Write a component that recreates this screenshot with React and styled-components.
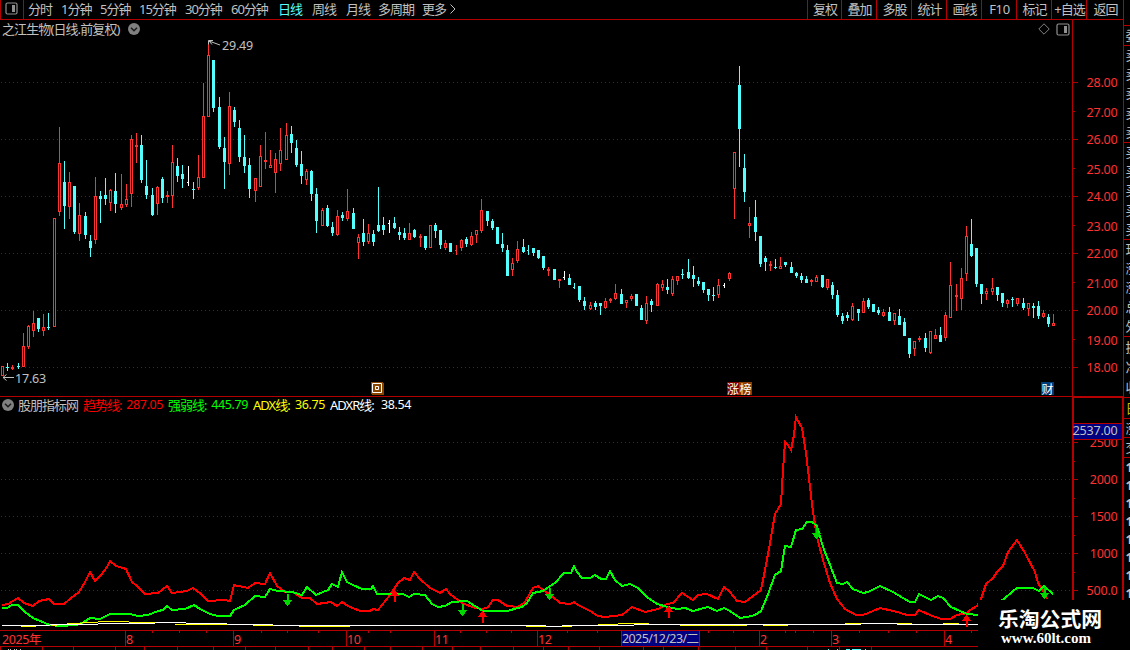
import React from "react";
import styled, { createGlobalStyle } from "styled-components";

const RED = "#b40000";
const GRID = "#a00000";
const UP = "#ff3232";
const DOWN = "#54ffff";
const TEXT = "#c0c0c0";
const CJK = '"Noto Sans", "Noto Sans CJK SC", sans-serif';

const GlobalStyle = createGlobalStyle`
  html, body { margin: 0; background: #000; overflow: hidden; }
  * { box-sizing: border-box; }
  svg { display: block; flex: none; }
  text { font-family: ${CJK}; white-space: pre; }
`;

const Screen = styled.div`
  position: relative;
  display: flex;
  width: 1130px;
  height: 650px;
  overflow: hidden;
  background: #000;
  color: ${TEXT};
  font: 13px/18px ${CJK};
  letter-spacing: -1px;
  white-space: nowrap;
`;

const Main = styled.div`
  display: flex;
  flex-direction: column;
  width: 1124px;
`;

const Toolbar = styled.div`
  display: flex;
  height: 20px;
  border-bottom: 1px solid ${RED};
  border-right: 1px solid ${RED};
`;

const IconCell = styled.div`
  display: flex;
  width: 24px;
  padding: 2px 0 0 4px;
  border: solid ${RED};
  border-width: 0 1px;
`;

const Periods = styled.div`
  display: flex;
  flex: 1;
  padding-left: 4px;
`;

const Period = styled.span`
  width: ${(p) => p.$w}px;
  color: ${(p) => (p.$active ? DOWN : TEXT)};
`;

const Action = styled.span`
  width: ${(p) => p.$w}px;
  border-left: 1px solid ${RED};
  text-align: center;
  padding-left: 1px;
  letter-spacing: ${(p) => p.$ls || -1}px;
`;

const Pane = styled.div`
  position: relative;
  display: flex;
  height: ${(p) => p.$h}px;
`;

const Legend = styled.div`
  position: absolute;
  top: ${(p) => p.$top}px;
  left: 2px;
  display: flex;
  align-items: center;
  height: 18px;
  gap: ${(p) => p.$gap}px;
`;

const Title = styled.span`
  width: ${(p) => p.$w}px;
  letter-spacing: ${(p) => p.$ls || -1}px;
`;

const Reading = styled.span`
  display: flex;
  justify-content: space-between;
  width: ${(p) => p.$w}px;
  margin-right: 1px;
  color: ${(p) => p.$color};
`;

const Value = styled.span`
  font-size: 12.5px;
  letter-spacing: -0.4px;
`;

const PaneTools = styled.div`
  position: absolute;
  top: 3px;
  right: 54px;
  display: flex;
  gap: 6px;
`;

const EventTag = styled.span`
  position: absolute;
  left: ${(p) => p.$x}px;
  top: 362px;
  display: flex;
  height: 13px;
  font: 12px/13px "Noto Sans CJK SC", sans-serif;
  letter-spacing: 0;
  color: #fff;
`;

const TagGlyph = styled.span`
  width: ${(p) => p.$w || 13}px;
  text-align: center;
  background: ${(p) => p.$bg};
`;

const QuoteStrip = styled.div`
  display: flex;
  flex-direction: column;
  width: 6px;
  height: 600px;
  overflow: hidden;
`;

const QuoteGroup = styled.div`
  display: flex;
  flex-direction: column;
  flex: none;
  justify-content: space-around;
  height: ${(p) => p.$h}px;
  padding-left: 1.5px;
  border-bottom: ${(p) => (p.$open ? "none" : `1px solid ${RED}`)};
  color: ${(p) => p.$color || TEXT};
  line-height: 17px;
  font-weight: ${(p) => (p.$bold ? 700 : 400)};
`;

const Watermark = styled.div`
  position: absolute;
  left: 978px;
  top: 600px;
  display: flex;
  flex-direction: column;
  width: 152px;
  height: 50px;
  padding: 6px 0 0 20px;
  background: #000;
  color: #fff;
  letter-spacing: 0;
`;

const SiteName = styled.span`
  font-family: "Noto Sans CJK SC", sans-serif;
  font-size: 20.8px;
  line-height: 24px;
  font-weight: 700;
`;

const SiteUrl = styled.span`
  padding-left: 3px;
  font: 700 15px/16px "Liberation Serif", serif;
`;

/* x, high, body top, body bottom, low, kind */
const candles = `2 366 366 376 376 r|7 363 367 368 371 c|12 365 367 369 370 r|18 363 366 367 369 c|23 333 346 367 367 r|28 325 326 347 349 r|33 311 323 331 337 r|38 318 318 329 332 c|43 314 327 331 336 r|48 313 327 328 330 c|54 218 218 327 327 r|59 127 163 212 216 r|64 161 182 206 229 c|69 172 182 207 219 r|74 186 186 232 234 c|79 203 215 234 241 r|85 212 216 235 239 c|90 235 241 248 257 c|95 177 196 240 244 r|100 191 196 199 223 c|105 178 195 199 205 c|110 189 190 203 211 r|115 173 191 204 213 c|121 174 204 208 210 r|126 184 199 205 207 r|131 135 139 194 207 r|136 133 145 147 163 r|141 135 145 180 183 c|146 160 186 195 199 c|152 188 195 215 216 c|157 186 187 204 215 r|162 177 179 198 203 c|167 191 195 197 203 r|172 145 162 196 208 r|177 158 166 176 182 c|182 165 174 179 188 c|188 166 182 182 186 w|193 182 189 190 199 c|198 155 177 188 190 r|203 83 116 178 178 r|208 42 55 117 117 r|213 60 60 108 112 c|219 97 107 147 149 c|224 137 148 162 189 c|229 92 106 164 175 r|234 107 110 122 127 c|239 120 128 157 162 c|244 135 157 166 173 c|249 158 165 189 198 c|255 178 178 191 202 r|260 145 156 187 187 r|265 132 160 162 169 r|270 150 165 168 168 r|275 153 159 173 193 r|280 128 150 164 171 r|286 123 135 160 160 r|291 126 134 143 153 c|296 140 148 165 167 c|301 151 164 176 184 c|306 169 171 180 185 r|311 170 171 194 201 c|316 188 194 221 233 c|322 208 210 226 226 r|327 205 208 226 227 c|332 222 227 233 236 c|337 210 216 235 236 r|342 212 215 218 221 c|347 189 211 219 221 r|353 208 213 229 229 c|358 234 237 243 259 r|363 219 233 242 246 c|368 224 233 242 244 r|373 230 234 242 246 c|378 187 225 231 232 c|383 217 225 230 235 c|389 220 223 223 233 w|394 217 223 228 229 c|399 227 232 235 240 c|404 228 233 238 240 c|409 223 233 240 240 r|414 229 230 237 238 c|420 234 236 238 247 r|425 236 236 248 250 c|430 225 225 248 248 r|435 223 225 231 238 c|440 230 230 245 249 c|445 240 243 248 250 r|450 243 243 252 252 c|456 245 250 250 255 r|461 239 240 248 251 r|466 237 239 244 247 c|471 232 236 245 246 r|476 230 230 235 243 r|481 199 210 231 233 r|487 211 211 221 226 c|492 219 221 228 230 c|497 227 227 244 244 c|502 233 244 248 252 c|507 245 250 276 276 c|512 258 263 270 276 r|517 241 249 261 263 r|523 239 247 252 253 c|528 245 250 250 255 c|533 248 248 253 256 c|538 250 250 258 259 c|543 256 256 268 270 c|548 267 269 271 276 r|554 269 269 280 280 c|559 279 279 281 288 r|564 271 277 277 280 w|569 274 278 285 285 c|574 283 287 287 289 c|579 286 286 300 302 c|584 297 301 306 310 c|590 302 305 309 310 r|595 301 303 307 310 c|600 303 303 306 315 c|605 298 301 308 309 r|610 298 299 301 303 r|615 284 293 299 300 r|621 289 294 304 304 c|626 300 300 303 308 r|631 294 296 299 301 r|636 294 294 306 306 c|641 305 308 320 320 c|646 296 303 321 324 r|651 299 301 305 312 c|657 283 284 306 306 r|662 280 284 288 291 r|667 279 287 290 294 c|672 276 279 294 296 r|677 276 276 281 285 r|682 269 274 275 279 c|688 259 272 278 279 c|693 266 275 279 287 c|698 277 281 284 286 c|703 282 282 290 293 c|708 289 289 295 301 c|713 287 295 296 301 c|718 279 285 295 298 r|724 283 285 285 288 w|729 272 273 279 281 r|734 152 152 189 219 r|739 66 85 129 167 c|744 154 168 192 202 c|749 207 223 226 238 r|755 200 217 232 241 c|760 236 236 264 267 c|765 256 258 262 271 c|770 261 264 266 271 r|775 259 267 268 269 c|780 257 266 269 269 r|785 262 262 265 267 c|791 262 267 273 273 c|796 272 273 276 278 c|801 273 276 280 283 c|806 276 279 283 283 c|811 279 280 282 286 r|816 275 277 282 282 r|822 275 275 287 288 c|827 279 279 288 290 r|832 282 285 295 299 c|837 290 295 315 317 c|842 313 316 321 324 c|847 312 315 318 321 c|852 303 306 320 321 r|858 309 309 313 321 c|863 298 301 313 313 r|868 298 300 307 309 c|873 304 304 312 312 c|878 307 310 313 315 c|883 309 312 316 317 r|889 307 312 321 321 c|894 313 313 321 325 r|899 309 316 325 325 c|904 318 322 336 336 c|909 338 338 354 358 c|914 341 341 349 356 r|919 336 338 340 342 r|925 333 338 348 352 c|930 331 331 353 354 r|935 329 335 339 339 r|940 327 335 342 342 c|945 312 315 338 341 r|950 262 285 318 318 r|956 284 295 297 311 r|961 268 278 299 310 r|966 226 236 274 281 r|971 219 244 256 257 c|976 248 248 284 287 c|981 284 284 294 304 c|986 288 291 294 300 r|992 278 288 292 295 r|997 287 287 295 301 c|1002 293 293 303 307 c|1007 299 300 304 308 r|1012 297 299 300 307 c|1017 298 298 304 306 r|1023 298 303 308 310 c|1028 303 303 309 316 r|1033 303 306 308 318 c|1038 301 306 316 319 c|1043 310 313 317 318 r|1048 314 317 324 327 c|1053 314 323 326 326 r`
  .split("|")
  .map((row) => {
    const f = row.split(" ");
    return [...f.slice(0, 5).map(Number), f[5]];
  });

const trend = "2,605 8,604 18,598 24,603 33,606 39,601 49,599 54,604 64,604 71,598 79,592 85,582 90,572 95,581 101,575 107,567 110,561 116,566 126,569 132,582 137,586 145,594 158,593 167,586 172,593 187,591 193,588 201,594 208,601 224,600 230,601 234,585 248,588 255,583 265,584 270,573 277,586 285,592 293,592 302,598 310,598 317,604 331,602 337,606 342,602 348,606 360,611 370,611 373,609 378,610 390,595 398,583 404,578 410,580 414,572 420,579 430,588 440,593 446,589 450,594 462,603 475,608 483,609 488,607 493,600 498,600 507,606 518,607 525,602 533,588 538,586 543,590 552,596 560,603 570,604 574,602 578,605 590,611 598,616 605,617 622,615 632,607 645,612 658,609 667,604 673,603 682,593 693,600 698,595 707,594 718,599 724,587 730,592 737,601 745,602 753,596 761,590 765,570 770,543 775,514 781,504 783,470 785,442 788,445 791,450 794,435 796,417 802,428 806,453 810,487 813,512 817,537 823,560 830,583 837,599 845,609 856,615 863,615 873,611 880,608 897,612 907,615 915,615 919,610 932,616 942,619 950,619 957,615 967,613 970,610 977,606 981,599 986,584 993,578 997,572 1003,566 1008,552 1017,540 1025,553 1035,572 1038,583 1044,592 1047,599";
const strength = "2,608 7,608 12,605 18,605 25,612 33,618 45,623 50,625 60,626 77,625 84,622 90,618 100,619 110,614 130,614 138,616 148,615 158,611 163,610 167,606 172,610 185,609 194,605 200,609 210,614 218,616 230,616 234,610 245,605 255,596 265,597 270,589 278,591 292,592 302,595 307,587 316,595 323,592 328,590 332,584 338,587 342,572 347,582 353,585 362,589 371,589 373,586 377,594 403,594 409,597 414,594 425,595 432,604 438,607 445,606 452,602 467,601 483,611 507,611 522,607 527,603 533,593 543,591 550,586 555,583 564,573 571,573 574,566 577,572 582,578 590,578 595,575 601,579 606,579 610,571 615,580 622,586 630,584 638,588 647,597 657,604 668,607 677,609 685,608 693,611 708,607 717,611 724,608 730,611 740,618 747,617 755,615 761,611 767,597 775,575 781,571 785,546 791,547 796,530 802,529 807,522 812,522 817,526 823,547 832,570 837,583 843,584 847,582 853,589 863,593 868,592 880,586 893,592 903,598 910,602 915,602 919,594 931,600 938,596 943,598 951,607 960,611 967,614 978,615 1004,599 1013,591 1017,588 1033,588 1039,591 1044,586 1053,594";

/* Flat step runs of the ADX and ADXR lines: from, to, y */
const adxr = [[2, 50, 625], [50, 98, 624], [98, 155, 623], [155, 186, 622], [186, 227, 623], [227, 273, 624], [273, 546, 625], [546, 562, 626], [562, 634, 625], [634, 861, 624], [861, 897, 623], [897, 978, 624]];
const adx = [[21, 36, 626], [51, 57, 625], [67, 82, 623], [82, 98, 622], [98, 129, 621], [129, 155, 622], [175, 227, 624], [253, 273, 625], [299, 350, 626], [526, 546, 626], [562, 572, 626], [598, 618, 624], [618, 649, 623], [680, 747, 625], [763, 788, 625], [845, 861, 623], [897, 912, 623], [943, 959, 623]];

const periods = [["分时", 33], ["1分钟", 39], ["5分钟", 39], ["15分钟", 46], ["30分钟", 46], ["60分钟", 47], ["日线", 34, true], ["周线", 34], ["月线", 32], ["多周期", 44], ["更多", 27]];
const actions = [["复权", 34], ["叠加", 35], ["多股", 35], ["统计", 35], ["画线", 35], ["F10", 35, -0.3], ["标记", 35], ["+自选", 35], ["返回", 37]];
const months = [["8", 125], ["9", 233], ["10", 346], ["11", 434], ["12", 537], ["2", 759], ["3", 831], ["4", 944]];
const weekTicks = [152, 179, 206, 261, 287, 318, 368, 390, 460, 486, 511, 567, 597, 708, 733, 785, 795, 813, 859, 888, 916, 971];
const footTicks = [0, 42, 73, 115, 144, 177, 213, 245, 275, 308, 332, 364, 390, 422, 452, 480, 513, 543, 568, 599, 643, 663, 698, 735, 766, 807, 839, 871];

function Candle({ d: [x, high, top, bottom, low, kind] }) {
  const color = kind === "r" ? UP : kind === "c" ? DOWN : "#fff";
  if (top === bottom)
    return <path fill={color} d={`M${x} ${high}h1V${low}h-1zM${x - 1} ${top}h1v1h-1z`} />;
  if (kind === "r" && bottom - top > 2)
    return (
      <path
        fill={color}
        d={`M${x} ${high}h1V${top}h-1zM${x} ${bottom}h1V${low}h-1zM${x - 1} ${top}h3v1h-3zM${x - 1} ${bottom - 1}h3v1h-3zM${x - 1} ${top}h1V${bottom}h-1zM${x + 1} ${top}h1V${bottom}h-1z`}
      />
    );
  return <path fill={color} d={`M${x} ${high}h1V${low}h-1zM${x - 1} ${top}h3V${bottom}h-3z`} />;
}

const Grid = ({ rows }) =>
  rows.map((y) => <line key={y} x1="1" x2="1072" y1={y + 0.5} y2={y + 0.5} stroke={GRID} strokeDasharray="1 3" />);

const Steps = ({ runs, color }) =>
  runs.map(([a, b, y]) => <rect key={a} x={a} y={y} width={b - a} height="1" fill={color} />);

const Signal = ({ x, y, up }) =>
  up ? (
    <path fill="#ff0000" d={`M${x + 0.5} ${y}l5 6h-4v6h-2v-6h-4z`} />
  ) : (
    <path fill="#00d800" d={`M${x - 0.5} ${y}h2v6h4l-5 6l-5-6h4z`} />
  );

const PanelIcon = ({ w = 13, h = 13, color = "#909090" }) => (
  <svg width={w} height={h} viewBox={`0 0 ${w} ${h}`}>
    <rect x="1" y="1" width={w - 2} height={h - 2} rx="1.5" fill="none" stroke={color} strokeWidth="1.2" />
    <rect x={w - 6} y="3" width="3" height={h - 6} fill={color} />
  </svg>
);

const DropIcon = () => (
  <svg width="12" height="12" viewBox="0 0 12 12">
    <circle cx="6" cy="6" r="6" fill="#808080" />
    <path d="M3 4.7l3 3 3-3" fill="none" stroke="#181818" strokeWidth="1.4" />
  </svg>
);

function AxisLabel({ y, children, x = 1117.5, color = UP }) {
  return (
    <text x={x} y={y} textAnchor="end" fontSize="12.5" letterSpacing="-0.2" fill={color}>
      {children}
    </text>
  );
}

export default function App() {
  return (
    <Screen>
      <GlobalStyle />
      <Main>
        <Toolbar>
          <IconCell><PanelIcon /></IconCell>
          <Periods>
            {periods.map(([label, w, active]) => (
              <Period key={label} $w={w} $active={active}>{label}</Period>
            ))}
            <svg width="8" height="18" viewBox="0 0 8 18">
              <path d="M1.5 4.5l4.5 4.5-4.5 4.5" fill="none" stroke={TEXT} />
            </svg>
          </Periods>
          {actions.map(([label, w, ls]) => (
            <Action key={label} $w={w} $ls={ls}>{label}</Action>
          ))}
        </Toolbar>

        <Pane $h={377}>
          <svg width="1072" height="377" viewBox="0 20 1072 377">
            <g shapeRendering="crispEdges">
              <Grid rows={[82, 139, 196, 253, 310, 367]} />
              {candles.map((d) => <Candle key={d[0]} d={d} />)}
              <path d="M0 396.5H1072" stroke={RED} />
            </g>
            <g fill="none" stroke={TEXT}>
              <path d="M213 40.5h-4.500v4M209 41l11 4M209 41l3 3.500" />
              <path d="M3 377.500h11M6.500 374.500l-3.500 3 3.500 3" />
            </g>
            <g fill={TEXT} fontSize="12.5" letterSpacing="-0.2">
              <text x="222" y="50">29.49</text>
              <text x="15" y="383">17.63</text>
            </g>
          </svg>
          <svg width="52" height="377" viewBox="1072 20 52 377">
            <g shapeRendering="crispEdges" stroke={RED}>
              <path d="M1072.500 20V397M1123.500 20V397" />
              <path d="M1072 396.500H1124" />
              {[82, 139, 196, 253, 310, 367].map((y) => <path key={y} d={`M1073 ${y + 0.5}h5`} />)}
              {[111, 168, 225, 282, 339].map((y) => <path key={y} d={`M1073 ${y + 0.5}h2`} />)}
            </g>
            {[28, 27, 26, 25, 24, 23, 22, 21, 20, 19, 18].map((v, i) => (
              <AxisLabel key={v} y={87 + i * 28.5 + (i % 2 ? 1.5 : 0)}>{v + ".00"}</AxisLabel>
            ))}
          </svg>
          <Legend $top={0} $gap={4}>
            <Title $w={122} $ls={-0.9}>之江生物(日线.前复权)</Title>
            <DropIcon />
          </Legend>
          <PaneTools>
            <svg width="12" height="12" viewBox="0 0 12 12">
              <path d="M6 .8L11.200 6 6 11.200 .8 6z" fill="none" stroke="#808080" />
            </svg>
            <PanelIcon w={14} h={13} />
          </PaneTools>
          <EventTag $x={371}>
            <svg width="13" height="13" viewBox="0 0 13 13">
              <path fill="#8a4500" d="M0 0h12v1h1v12H1v-1H0z" />
              <path fill="none" stroke="#fff" d="M1.500 1.500h9v9h-9zM4.500 4.500h3v3h-3z" />
            </svg>
          </EventTag>
          <EventTag $x={727}>
            <TagGlyph $bg="#800000" $w={12}>涨</TagGlyph>
            <TagGlyph $bg="#8a3c00">榜</TagGlyph>
          </EventTag>
          <EventTag $x={1041}>
            <TagGlyph $bg="#003c78">财</TagGlyph>
          </EventTag>
        </Pane>

        <Pane $h={233}>
          <svg width="1072" height="233" viewBox="0 397 1072 233">
            <g shapeRendering="crispEdges">
              <Grid rows={[442, 479, 516, 553, 590]} />
              <g fill="none" strokeWidth="2">
                <polyline points={trend} stroke="#ff0000" />
                <polyline points={strength} stroke="#00ff00" />
              </g>
              <Steps runs={adxr} color="#fff" />
              <Steps runs={adx} color="#ffff00" />
              {[[287, 594], [462, 604], [549, 588], [816, 527], [1044, 587]].map(([x, y]) => <Signal key={x} x={x} y={y} />)}
              {[[394, 590], [482, 611], [668, 606], [966, 615]].map(([x, y]) => <Signal key={x} x={x} y={y} up />)}
            </g>
          </svg>
          <svg width="52" height="233" viewBox="1072 397 52 233">
            <g shapeRendering="crispEdges">
              <g stroke={RED}>
                <path strokeWidth="2" d="M1073 397V630M1123 397V630" />
                <path d="M1072 397.500H1124" />
                {[442, 479, 516, 553, 590].map((y) => <path key={y} d={`M1074 ${y + 0.5}h4`} />)}
                {[461, 498, 535, 572].map((y) => <path key={y} d={`M1074 ${y + 0.5}h1`} />)}
              </g>
            </g>
            <AxisLabel y={447}>2500</AxisLabel>
            <AxisLabel y={484}>2000</AxisLabel>
            <AxisLabel y={521}>1500</AxisLabel>
            <AxisLabel y={558}>1000</AxisLabel>
            <AxisLabel y={595}>500.0</AxisLabel>
            <g shapeRendering="crispEdges">
              <rect x="1074" y="423" width="48" height="17" fill="#000080" />
              <path stroke={RED} d="M1074 423.500h48M1074 439.500h48" />
            </g>
            <AxisLabel y={435} color={TEXT}>2537.00</AxisLabel>
          </svg>
          <Legend $top={-1} $gap={4}>
            <DropIcon />
            <Title $w={61}>股朋指标网</Title>
            <Reading $w={80} $color="#ff0000">趋势线: <Value>287.05</Value></Reading>
            <Reading $w={80} $color="#00ff00">强弱线: <Value>445.79</Value></Reading>
            <Reading $w={72} $color="#ffff00">ADX线: <Value>36.75</Value></Reading>
            <Reading $w={81} $color="#ffffff">ADXR线: <Value>38.54</Value></Reading>
          </Legend>
        </Pane>

        <svg width="1124" height="20" viewBox="0 630 1124 20">
          <g shapeRendering="crispEdges" stroke={RED}>
            <path d="M0 630.500H978M0 646.500H978" />
            {months.map(([m, x]) => <path key={m} d={`M${x + 0.5} 631v15`} />)}
            {weekTicks.map((x) => <path key={x} d={`M${x + 0.5} 631v2`} />)}
            {footTicks.map((x) => <path key={x} d={`M${x + 0.5} 647v3`} />)}
            <rect x="621.500" y="630.500" width="78" height="16" fill="#000080" />
            <path stroke={TEXT} strokeDasharray="1 1 1 3" d="M8 649.500h14" />
            <path stroke={DOWN} strokeDasharray="1 8 1 8 4 2 9 4" d="M828 649.500h38" />
          </g>
          <g fontSize="12.5" fill={UP} letterSpacing="-0.4">
            <text x="2" y="643.500">2025年</text>
            {months.map(([m, x]) => <text key={m} x={x + 1} y="643.500">{m}</text>)}
            <text x="622" y="643" fill={TEXT} letterSpacing="0" textLength="77">2025/12/23/二</text>
          </g>
        </svg>
      </Main>

      <QuoteStrip>
        <QuoteGroup $h={26} />
        <QuoteGroup $h={20}><span>委比</span></QuoteGroup>
        <QuoteGroup $h={97}>{["五", "四", "三", "二", "一"].map((n) => <span key={n}>卖{n}</span>)}</QuoteGroup>
        <QuoteGroup $h={97}>{["一", "二", "三", "四", "五"].map((n) => <span key={n}>买{n}</span>)}</QuoteGroup>
        <QuoteGroup $h={97}>{["现价", "涨跌", "涨幅", "总量", "外盘"].map((n) => <span key={n}>{n}</span>)}</QuoteGroup>
        <QuoteGroup $h={61}>{["换手", "净资", "收益"].map((n) => <span key={n}>{n}</span>)}</QuoteGroup>
        <QuoteGroup $h={21} $color="#c0c000"><span>日期</span></QuoteGroup>
        <QuoteGroup $h={19}><span>涨停</span></QuoteGroup>
        <QuoteGroup $h={20}><span>交易</span></QuoteGroup>
        <QuoteGroup $h={144} $open $bold>
          {[50, 51, 52, 53, 54, 55, 56, 57].map((n) => <span key={n}>14:{n}</span>)}
        </QuoteGroup>
      </QuoteStrip>

      <Watermark>
        <SiteName>乐淘公式网</SiteName>
        <SiteUrl>www.60lt.com</SiteUrl>
      </Watermark>
    </Screen>
  );
}
